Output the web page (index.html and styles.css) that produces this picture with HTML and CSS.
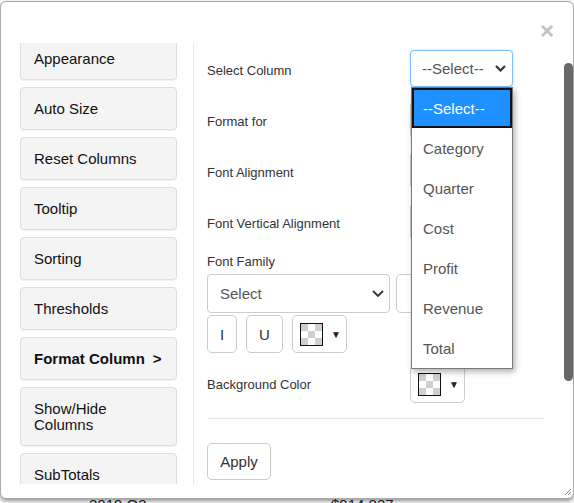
FILE: index.html
```html
<!DOCTYPE html>
<html>
<head>
<meta charset="utf-8">
<link rel="stylesheet" href="styles.css">
</head>
<body>
<div class="page">
  <div class="bg-row"><span class="c1">2019 Q3</span><span class="c2">$914,827</span></div>
</div>
<div class="modal">
  <div class="modal-header"><span class="close">×</span></div>
  <div class="modal-body">
    <div class="side">
      <div class="side-list">
        <div class="side-btn">Appearance</div>
        <div class="side-btn">Auto Size</div>
        <div class="side-btn">Reset Columns</div>
        <div class="side-btn">Tooltip</div>
        <div class="side-btn">Sorting</div>
        <div class="side-btn">Thresholds</div>
        <div class="side-btn active">Format Column<span class="gt">&gt;</span></div>
        <div class="side-btn">Show/Hide Columns</div>
        <div class="side-btn">SubTotals</div>
      </div>
    </div>
    <div class="main">
      <div class="row">
        <span class="lbl">Select Column</span>
        <div class="dd-wrap">
          <div class="sel sel-focus"><span>--Select--</span><svg class="chev" width="11" height="7" viewBox="0 0 11 7"><path d="M1 1l4.5 4.5 4.5-4.5" fill="none" stroke="#333" stroke-width="2.2"/></svg></div>
          <div class="dd-list">
            <div class="dd-item hl">--Select--</div>
            <div class="dd-item">Category</div>
            <div class="dd-item">Quarter</div>
            <div class="dd-item">Cost</div>
            <div class="dd-item">Profit</div>
            <div class="dd-item">Revenue</div>
            <div class="dd-item">Total</div>
          </div>
        </div>
      </div>
      <div class="row">
        <span class="lbl">Format for</span>
        <div class="sel"></div>
      </div>
      <div class="row">
        <span class="lbl">Font Alignment</span>
        <div class="sel"></div>
      </div>
      <div class="row">
        <span class="lbl">Font Vertical Alignment</span>
        <div class="sel"></div>
      </div>
      <div class="lbl ff-lbl">Font Family</div>
      <div class="ff-row">
        <div class="sel sel-wide"><span>Select</span><svg class="chev" width="12" height="7" viewBox="0 0 12 7"><path d="M1 1l5 5 5-5" fill="none" stroke="#333" stroke-width="1.8"/></svg></div>
        <div class="btn btn-b"></div>
      </div>
      <div class="style-row">
        <div class="btn btn-i">I</div>
        <div class="btn btn-u">U</div>
        <div class="btn btn-color"><span class="swatch"></span><span class="tri">▼</span></div>
      </div>
      <div class="row bg-color-row">
        <span class="lbl">Background Color</span>
        <div class="btn btn-color"><span class="swatch"></span><span class="tri">▼</span></div>
      </div>
      <div class="sep"></div>
      <div class="btn apply">Apply</div>
    </div>
  </div>
  <div class="scroll-thumb"></div>
  <svg class="grip" width="8" height="8" viewBox="0 0 8 8"><path d="M7 1L1 7M7 4L4 7M7 6.5L6.5 7" stroke="#888" stroke-width="1"/></svg>
</div>
</body>
</html>
```
FILE: styles.css
```css
body {
  margin: 0;
  width: 574px;
  height: 503px;
  overflow: hidden;
  position: relative;
  background: #fff;
  font-family: "Liberation Sans", Arial, sans-serif;
}

.page {
  height: 503px;
  display: flex;
  flex-direction: column;
  justify-content: flex-end;
}

.bg-row {
  display: flex;
  font-size: 15px;
  line-height: 17px;
  margin-bottom: -10px;
  color: #222;
}

.bg-row .c1 {
  margin-left: 89px;
  width: 242px;
}

.modal {
  position: absolute;
  left: 0;
  top: 1px;
  width: 574px;
  height: 498px;
  box-sizing: border-box;
  border: 1px solid #a9a9a9;
  border-radius: 6px;
  background: #fff;
  box-shadow: 0 2px 4px rgba(0, 0, 0, 0.45);
  display: flex;
  flex-direction: column;
}

.modal-header {
  height: 41px;
  flex: none;
  display: flex;
  justify-content: flex-end;
  align-items: flex-start;
  padding-right: 19px;
}

.close {
  font-size: 24px;
  font-weight: bold;
  line-height: 24px;
  color: #c2c2c2;
  margin-top: 17px;
}

.modal-body {
  height: 441px;
  flex: none;
  display: flex;
  overflow: hidden;
}

.side {
  width: 193px;
  flex: none;
  box-sizing: border-box;
  padding: 0 16px 0 19px;
  border-right: 1px solid #e6e6e6;
  overflow: hidden;
}

.side-list {
  margin-top: -6px;
  display: flex;
  flex-direction: column;
  gap: 7px;
}

.side-btn {
  box-sizing: border-box;
  width: 157px;
  padding: 13px 13px 12px;
  line-height: 16px;
  font-size: 15px;
  color: #111;
  background: #f4f4f4;
  border: 1px solid #dedede;
  border-radius: 4px;
  box-shadow: 0 1px 1px rgba(0, 0, 0, 0.06);
}

.side-btn.active {
  font-weight: bold;
}

.side-btn .gt {
  margin-left: 8px;
}

.main {
  flex: 1;
  padding: 7px 29px 0 13px;
  position: relative;
}

.lbl {
  font-size: 13px;
  line-height: 16px;
  color: #333;
}

.row {
  display: grid;
  grid-template-columns: 203px 103px;
  height: 40px;
  align-items: center;
  margin-bottom: 11px;
}

.row .lbl {
  padding-top: 2px;
}

.row .sel {
  align-self: start;
}

.sel {
  box-sizing: border-box;
  height: 37px;
  border: 1px solid #ccc;
  border-radius: 4px;
  background: #fff;
  display: flex;
  align-items: center;
  justify-content: space-between;
  padding: 0 6px 0 11px;
  font-size: 15px;
  color: #555;
}

.sel-focus {
  border-color: #80bdff;
  box-shadow: 0 0 3px rgba(0, 123, 255, 0.25);
}

.dd-wrap {
  position: relative;
  align-self: start;
}

.dd-list {
  position: absolute;
  left: 1px;
  top: 37px;
  width: 102px;
  box-sizing: border-box;
  border: 1px solid #7a7a7a;
  background: #fff;
  box-shadow: 2px 3px 6px rgba(0, 0, 0, 0.3);
  z-index: 5;
}

.dd-item {
  height: 40px;
  box-sizing: border-box;
  display: flex;
  align-items: center;
  padding-left: 11px;
  font-size: 15px;
  color: #555;
}

.dd-item.hl {
  background: #1e90ff;
  color: #fff;
  border: 2px solid #111;
  padding-left: 9px;
}

.ff-lbl {
  margin-top: 0;
}

.ff-row {
  display: flex;
  gap: 6px;
  margin-top: 4px;
}

.sel-wide {
  width: 183px;
  height: 39px;
  padding: 0 5px 0 12px;
}

.btn {
  box-sizing: border-box;
  border: 1px solid #ccc;
  border-radius: 5px;
  background: #fff;
  display: flex;
  align-items: center;
  justify-content: center;
  font-size: 15px;
  color: #333;
}

.btn-b {
  width: 36px;
  height: 39px;
}

.style-row {
  display: flex;
  gap: 9px;
  margin-top: 2px;
}

.btn-i {
  width: 30px;
  height: 38px;
}

.btn-u {
  width: 37px;
  height: 38px;
}

.btn-color {
  width: 55px;
  height: 38px;
  justify-content: flex-start;
  padding-left: 7px;
  gap: 8px;
}

.swatch {
  width: 23px;
  height: 23px;
  box-sizing: border-box;
  border: 1px solid #111;
  background:
    linear-gradient(#fff, #fff) 7px 0 / 7px 7px no-repeat,
    linear-gradient(#fff, #fff) 0 7px / 7px 7px no-repeat,
    linear-gradient(#fff, #fff) 14px 7px / 7px 7px no-repeat,
    linear-gradient(#fff, #fff) 7px 14px / 7px 7px no-repeat,
    #cfcfcf;
}

.tri {
  font-size: 10px;
  color: #222;
}

.bg-color-row {
  margin-top: 12px;
  height: 38px;
  margin-bottom: 0;
}

.bg-color-row .btn-color {
  align-self: center;
}

.sep {
  height: 1px;
  background: #e8e8e8;
  margin-top: 15px;
}

.apply {
  width: 64px;
  height: 37px;
  margin-top: 24px;
}

.scroll-thumb {
  position: absolute;
  left: 563px;
  top: 61px;
  width: 9px;
  height: 318px;
  border-radius: 5px;
  background: #686868;
}

.grip {
  position: absolute;
  right: 1px;
  bottom: 2px;
}
```
